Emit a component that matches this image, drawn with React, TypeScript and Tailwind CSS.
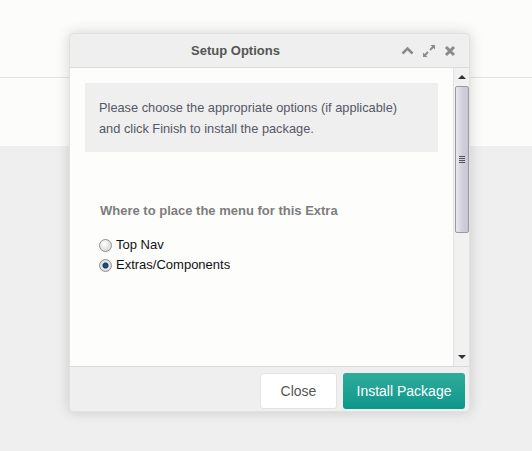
import React from 'react';

const font = { fontFamily: '"Liberation Sans", Arial, sans-serif' };

const ChevronUp = () => (
  <svg width="13" height="9" viewBox="0 0 13 9">
    <path d="M1.5 7.5 L6.5 2.5 L11.5 7.5" fill="none" stroke="#8a8a8a" strokeWidth="2.6" />
  </svg>
);

const Expand = () => (
  <svg width="14" height="14" viewBox="0 0 14 14">
    <path d="M8.5 1 H13 V5.5 Z M1 8.5 V13 H5.5 Z" fill="#8a8a8a" />
    <path d="M11.5 2.5 L8 6 M2.5 11.5 L6 8" stroke="#8a8a8a" strokeWidth="1.8" />
  </svg>
);

const Times = () => (
  <svg width="12" height="12" viewBox="0 0 12 12">
    <path d="M2 2 L10 10 M10 2 L2 10" stroke="#8a8a8a" strokeWidth="3" />
  </svg>
);

const Scrollbar = () => (
  <div className="flex w-[16px] flex-col items-center border-l border-[#e2e3e2] bg-[#f0f1f0]">
    <div className="flex h-[18px] items-center justify-center">
      <div className="h-0 w-0 border-x-[4px] border-b-[4px] border-x-transparent border-b-[#333]" />
    </div>
    <div className="flex h-[147px] w-[14px] items-center justify-center rounded-[2px] border border-[#9a9a9e] bg-gradient-to-r from-[#e9e8ee] via-[#d2d0da] to-[#c9c7d1]">
      <div className="flex flex-col gap-[1px]">
        <div className="h-[1px] w-[6px] bg-[#555]" />
        <div className="h-[1px] w-[6px] bg-[#555]" />
        <div className="h-[1px] w-[6px] bg-[#555]" />
        <div className="h-[1px] w-[6px] bg-[#555]" />
      </div>
    </div>
    <div className="flex-1" />
    <div className="flex h-[18px] items-center justify-center">
      <div className="h-0 w-0 border-x-[4px] border-t-[4px] border-x-transparent border-t-[#333]" />
    </div>
  </div>
);

const radioCls =
  'm-0 h-[13px] w-[13px] appearance-none rounded-full border border-[#8e8f8f] bg-[radial-gradient(circle_at_40%_35%,#ffffff_0,#dcdcdc_70%,#c4c4c4_100%)] checked:bg-[radial-gradient(circle,#1d5a8c_0,#0f3b63_2.5px,#e6e6e6_3.5px,#d0d0d0_100%)]';

const App: React.FC = () => {
  return (
    <div className="relative h-[451px] w-full overflow-hidden bg-[#eeefee]" style={font}>
      {/* page behind the modal */}
      <div className="h-[146px] bg-[#fcfcfb]">
        <div className="h-[78px] border-b border-[#e3e4e3]" />
      </div>

      {/* modal */}
      <div className="absolute left-[69px] top-[33px] flex h-[379px] w-[401px] flex-col overflow-hidden rounded-[4px] border border-[#e0e1e0] bg-[#eeefee] shadow-[0_0_14px_rgba(0,0,0,0.16)]">
        {/* Header */}
        <div className="flex h-[34px] items-center border-b border-[#d9dad9]">
          <div className="flex-1 text-center text-[13px] font-bold text-[#555]">Setup Options</div>
          <div className="flex items-center gap-[8px] pr-[13px]">
            <ChevronUp />
            <Expand />
            <Times />
          </div>
        </div>

        {/* Body */}
        <div className="flex h-[298px]">
          <div className="flex-1 bg-[#fdfdfc] px-[15px] pt-[15px]">
            <div className="bg-[#eeefee] pb-[13px] pl-[14px] pr-[10px] pt-[14px] text-[12.8px] leading-[21px] text-[#575766]">
              Please choose the appropriate options (if applicable)
              <br />
              and click Finish to install the package.
            </div>
            <div className="mt-[48px] pl-[15px] text-[13px] font-bold leading-[21px] text-[#7d7d7d]">
              Where to place the menu for this Extra
            </div>
            <div className="mt-[14px] flex flex-col pl-[14px] text-[13px] leading-[20px] text-[#111]">
              <label className="flex items-center gap-[4px]">
                <input type="radio" name="menu" className={radioCls} />
                Top Nav
              </label>
              <label className="flex items-center gap-[4px]">
                <input type="radio" name="menu" defaultChecked className={radioCls} />
                Extras/Components
              </label>
            </div>
          </div>
          <Scrollbar />
        </div>

        {/* Footer */}
        <div className="flex flex-1 items-start justify-end gap-[6px] border-t border-[#d9dad9] pr-[4px] pt-[6px]">
          <button className="h-[36px] w-[77px] rounded-[3px] border border-[#e2e3e2] bg-white text-[14px] text-[#555]">
            Close
          </button>
          <button className="h-[36px] w-[122px] rounded-[3px] bg-gradient-to-b from-[#2eab9b] to-[#0b978a] text-[14px] text-white">
            Install Package
          </button>
        </div>
      </div>
    </div>
  );
};

export default App;
